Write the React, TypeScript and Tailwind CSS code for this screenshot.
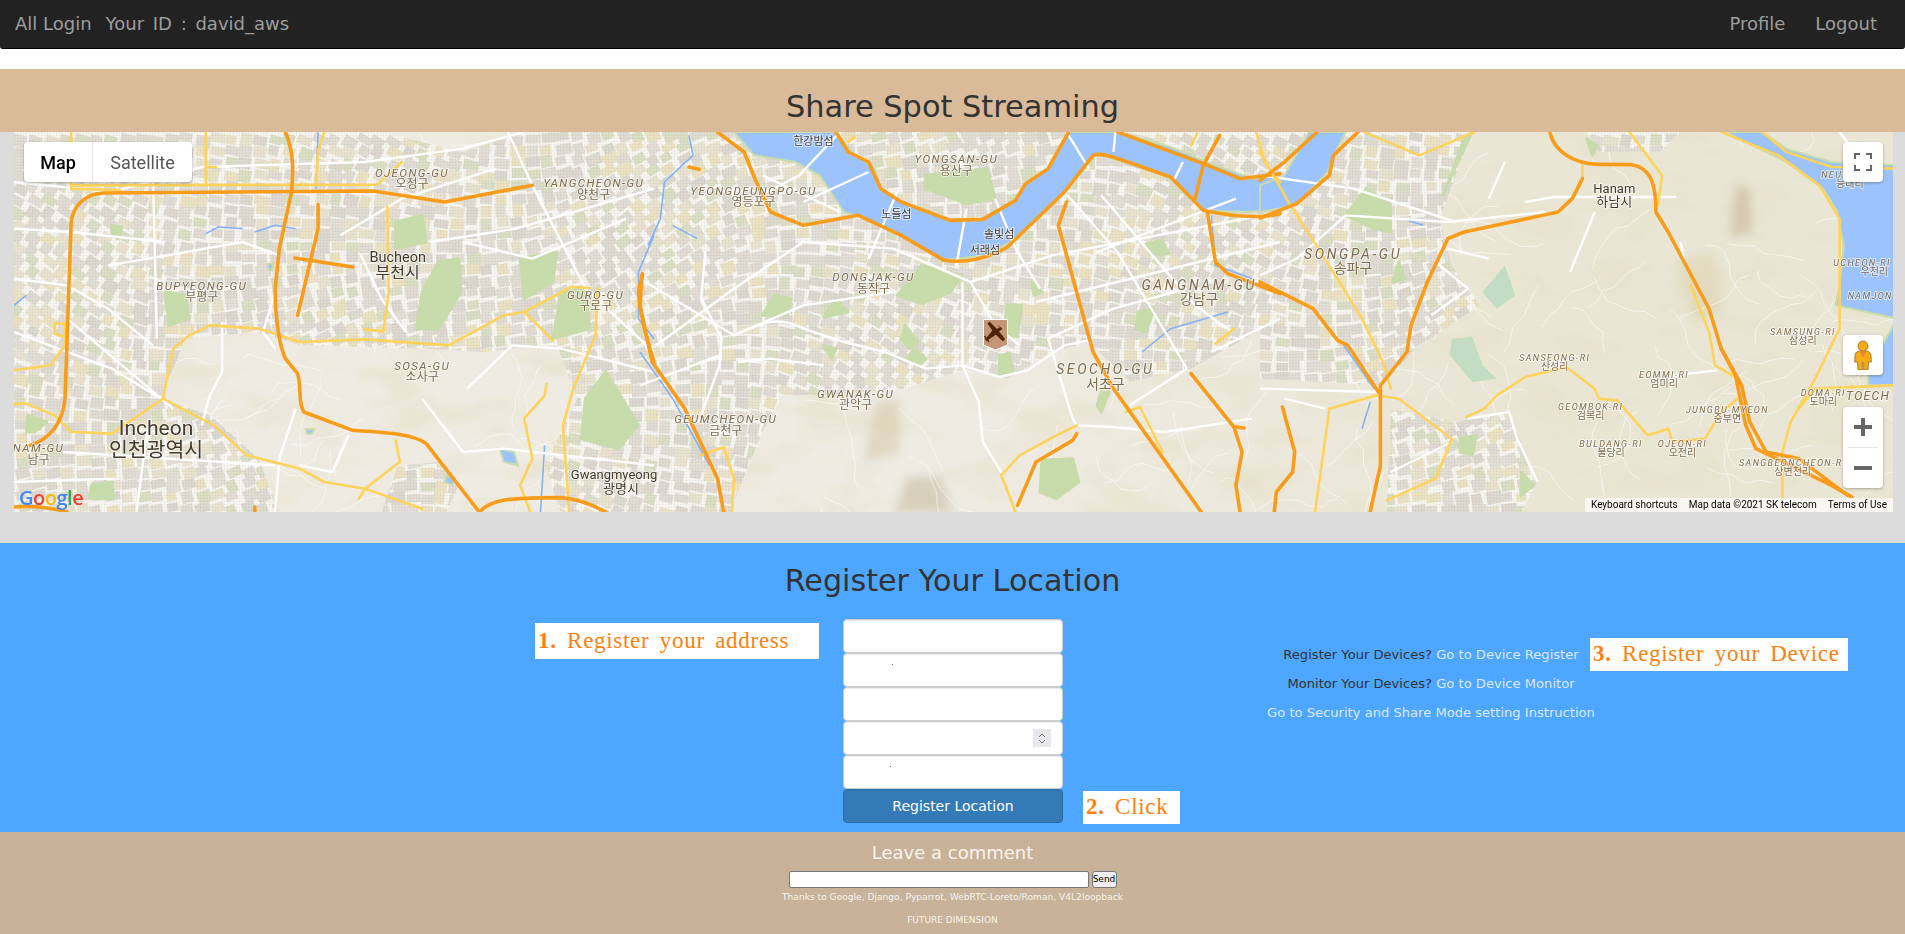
const SX = 2.45
const SY = 3

// map drawn from three overlapping tiles, coordinates are per tile
const OFF_A = 0
const OFF_B = 626
const OFF_C = 1246

const tile = (off: number) => `translate(${off} 0) scale(${1 / SX} ${1 / SY})`

type Tile = {
  off: number
  urban: string[]
  green: string[]
  water: string[]
  streams: string[]
  streets: string[]
  yellow: string[]
  orange: string[]
}

const tiles: Tile[] = [
  {
    off: OFF_A,
    urban: [
      'M 0 0 L 900 0 L 1100 60 L 1250 0 L 1568 0 L 1568 720 L 1330 640 L 1150 660 L 1000 650 L 700 640 L 600 600 L 420 620 L 360 800 L 480 850 L 600 980 L 650 1140 L 0 1140 Z',
      'M 940 1000 L 1040 990 L 1090 1060 L 1060 1140 L 900 1140 Z',
      'M 1330 640 L 1568 720 L 1568 1140 L 1340 1140 L 1300 1000 L 1380 800 Z',
    ],
    green: [
      'M 935 270 L 1000 250 L 1010 330 L 935 350 Z',
      'M 1040 390 L 1090 380 L 1095 480 L 1040 590 L 985 590 L 1000 480 Z',
      'M 1240 380 L 1330 360 L 1320 450 L 1250 500 Z',
      'M 1340 480 L 1400 470 L 1410 590 L 1320 620 Z',
      'M 1400 800 L 1450 720 L 1530 880 L 1480 950 L 1390 920 Z',
      'M 370 480 L 420 490 L 430 560 L 380 580 Z',
      'M 190 1060 L 240 1050 L 245 1100 L 185 1100 Z',
      'M 240 280 L 265 285 L 255 320 L 240 310 Z',
      'M 35 850 L 80 870 L 50 900 L 30 900 Z',
    ],
    water: [
      'M 1190 950 L 1225 960 L 1235 1000 L 1200 990 Z',
      'M 1060 1030 L 1080 1040 L 1075 1060 L 1055 1050 Z',
      'M 715 892 L 735 892 L 730 905 L 718 905 Z',
      'M 622 395 L 636 395 L 632 415 L 622 412 Z',
    ],
    streams: [
      'M 745 0 L 740 170',
      'M 1568 310 L 1530 420 L 1530 560 L 1568 620',
      'M 470 305 L 500 285 L 560 290',
      'M 590 300 L 640 280 L 690 290',
      'M 1300 940 L 1290 1140',
      'M 0 520 L 30 490',
    ],
    streets: [
      'M 0 150 L 240 180 L 460 105 L 860 90 L 1100 50 L 1250 0',
      'M 0 600 L 240 710 L 360 800',
      'M 130 560 L 390 830',
      'M 230 400 L 330 380 L 560 330 L 650 370',
      'M 800 310 L 950 200 L 1180 110',
      'M 1020 330 L 1230 290 L 1568 170',
      'M 1210 0 L 1270 160 L 1400 470 L 1568 660',
      'M 1100 330 L 1270 380 L 1500 260',
      'M 510 570 L 510 720 L 480 790 L 460 880',
      'M 690 830 L 650 980 L 640 1140',
      'M 1000 800 L 1100 960 L 1200 950 L 1568 1000',
      'M 1110 770 L 1220 640 L 1340 650 L 1568 720',
      'M 820 910 L 780 1020 L 700 1000',
      'M 640 480 L 610 600 L 640 650',
      'M 850 370 L 900 500 L 960 600',
      'M 0 290 L 140 300 L 370 330',
      'M 0 440 L 130 460 L 230 530 L 340 640',
      'M 340 100 L 350 620',
      'M 120 960 L 640 1000',
      'M 330 860 L 300 1140',
      'M 0 1050 L 250 1040',
    ],
    yellow: [
      'M 140 0 L 140 170 L 260 175',
      'M 470 0 L 470 160',
      'M 760 0 L 745 60 L 740 160',
      'M 140 160 L 890 158 L 950 90',
      'M 470 105 L 495 105',
      'M 915 225 L 918 480 L 905 598 L 860 592',
      'M 1365 465 L 1250 540 L 1200 550 L 1065 640 L 860 622 L 700 630 L 600 590 L 480 580 L 430 610 L 390 650 L 365 800 L 240 905 L 140 900 L 100 850 L 30 815 L 0 815',
      'M 365 800 L 490 880 L 570 970 L 700 1010 L 760 1050 L 860 1070 L 1000 1130',
      'M 0 715 L 90 700 L 125 640 L 125 575 L 100 575 L 100 605 L 125 615',
      'M 1250 540 L 1320 625',
      'M 1430 470 L 1425 610 L 1370 770 L 1345 880 L 1360 1140',
      'M 1305 755 L 1300 790 L 1250 860 L 1270 980 L 1240 1060 L 1265 1140',
      'M 935 925 L 945 990 L 860 1070 L 845 1100',
      'M 1365 465 L 1410 468',
    ],
    orange: [
      'M 40 940 C 90 920 120 870 125 800 L 140 270 C 145 220 175 185 220 183 L 880 177 L 1055 210 L 1270 160',
      'M 665 0 C 685 60 685 110 680 180 L 650 350 L 640 470 C 640 560 650 640 665 680 L 695 725 C 705 770 695 810 710 840 L 830 895 C 900 900 980 905 1010 935 L 1140 1140',
      'M 745 218 L 745 290 L 695 550',
      'M 688 378 L 830 405',
      'M 1140 1140 C 1170 1100 1220 1097 1340 1097 C 1380 1100 1420 1120 1450 1140',
      'M 0 1125 C 50 1120 100 1130 130 1140',
      'M 590 1125 L 590 1140',
      'M 1540 425 L 1530 480 C 1535 560 1550 620 1568 690',
    ],
  },
  {
    off: OFF_B,
    urban: [
      'M 0 0 L 1568 0 L 1568 560 L 1350 710 L 1200 750 L 1100 630 L 1010 660 L 900 740 L 800 710 L 650 770 L 450 790 L 350 790 L 300 900 L 220 1140 L 0 1140 Z',
    ],
    green: [
      'M 690 400 L 790 430 L 760 480 L 690 515 L 630 490 Z',
      'M 700 130 L 850 110 L 870 200 L 800 215 L 700 170 Z',
      'M 330 490 L 370 500 L 360 550 L 300 550 Z',
      'M 480 500 L 510 540 L 450 555 Z',
      'M 650 580 L 680 630 L 660 650 L 640 620 Z',
      'M 670 650 L 700 680 L 685 700 L 655 680 Z',
      'M 900 520 L 935 520 L 925 615 L 890 600 Z',
      'M 880 670 L 905 665 L 915 725 L 880 730 Z',
      'M 985 985 L 1060 980 L 1075 1050 L 1020 1100 L 980 1080 Z',
      'M 1240 335 L 1280 325 L 1295 365 L 1250 365 Z',
      'M 450 640 L 480 650 L 470 680 Z',
      'M 1220 540 L 1260 530 L 1240 600 L 1215 590 Z',
      'M 960 450 L 985 480 L 965 490 Z',
      'M 1130 780 L 1150 780 L 1130 840 L 1120 820 Z',
    ],
    water: [
      'M 230 0 L 480 0 L 520 60 L 575 110 L 590 170 L 640 210 L 770 265 L 830 262 L 920 205 L 950 150 L 1000 110 L 1050 0 L 1170 0 L 1300 45 L 1400 95 L 1500 140 L 1568 130 L 1568 235 L 1480 240 L 1380 235 L 1300 135 L 1120 65 L 1040 180 L 920 320 L 850 370 L 740 385 L 640 310 L 530 250 L 500 240 L 440 130 L 380 90 L 280 70 Z',
    ],
    streams: [
      'M 120 10 L 130 70 L 60 150 L 50 260 L 20 340',
      'M 0 660 L 80 800 L 170 1000',
      'M 1400 250 L 1410 400 L 1500 440',
      'M 1440 540 L 1300 590 L 1230 660',
      'M 80 280 L 140 320',
    ],
    streets: [
      'M 230 610 C 300 570 340 550 400 590 L 500 630 L 600 660 L 700 710 L 790 700 L 880 735 L 950 715 L 1040 640 L 1100 625',
      'M 790 450 L 790 700 L 830 810 L 840 930 L 890 1030',
      'M 160 360 L 150 500 L 200 620 L 195 700 L 150 850',
      'M 700 390 L 810 450 L 1010 370 L 1568 240',
      'M 810 450 L 870 580 L 930 640',
      'M 810 450 L 620 350 L 400 330 L 230 470 L 40 640',
      'M 0 440 L 230 610 L 400 520 L 620 480',
      'M 195 670 L 0 760',
      'M 490 0 L 390 130 L 280 200',
      'M 560 120 L 400 210',
      'M 1040 180 L 1170 360 L 1340 710',
      'M 1050 10 L 1100 110',
      'M 870 200 L 920 350 L 980 470',
      'M 800 230 L 775 400',
      'M 630 180 L 560 380',
      'M 1330 90 L 1310 140',
      'M 1165 0 L 1160 60',
      'M 970 510 L 1568 330',
      'M 1130 190 L 1360 520 L 1450 600',
      'M 1120 360 L 1460 200',
      'M 300 130 L 490 240',
      'M 1000 620 L 1160 530 L 1340 470',
      'M 1000 620 L 1060 860 L 1070 880 L 1160 885 L 1280 900 L 1340 890 L 1500 860',
      'M 1200 820 L 1340 710',
      'M 1400 660 L 1568 560',
      'M 240 690 L 320 680 L 450 700',
    ],
    yellow: [
      'M 1070 880 L 1020 910 L 930 970 L 885 1030 L 920 1140',
      'M 205 945 L 150 970',
      'M 205 945 L 230 1040 L 225 1140',
      'M 1225 825 L 1280 960',
      'M 1190 840 L 1225 825',
      'M 1510 0 L 1530 90 L 1568 150',
      'M 1350 40 L 1365 5',
      'M 1455 590 L 1410 635',
      'M 510 30 L 525 15',
    ],
    orange: [
      'M 190 0 L 255 60 L 285 150 L 320 240 L 400 280 L 535 250 L 640 310 L 745 385 C 800 395 860 375 900 345 L 1040 180 L 1110 70 C 1130 60 1150 70 1300 135 L 1380 235 C 1420 245 1500 265 1568 245',
      'M 480 0 L 510 60 L 560 90 L 590 170 L 640 210 L 760 265 L 840 262 L 920 205 L 945 155 L 1000 110 L 1050 0',
      'M 1170 0 L 1380 95 L 1470 140 L 1568 125',
      'M 1420 10 L 1380 100 L 1360 200',
      'M 1045 210 L 1025 280 L 1110 660 L 1160 770 L 1375 1140',
      'M 1350 725 L 1455 885 L 1475 960 L 1460 1060 L 1470 1140',
      'M 1460 885 L 1480 888',
      'M 1390 240 L 1410 390 L 1440 425 L 1568 485',
      'M 5 430 L 0 520 L 30 690 L 110 830 L 190 1040 L 205 1140',
      'M 120 105 L 145 112',
      'M 1070 905 L 1060 925 L 970 990 L 925 1120',
    ],
  },
  {
    off: OFF_C,
    urban: [
      'M 0 0 L 520 0 L 440 260 L 470 400 L 540 520 L 380 650 L 300 760 L 0 740 Z',
      'M 320 830 L 480 870 L 610 840 L 680 1050 L 640 1140 L 310 1140 Z',
      'M 800 0 L 1030 0 L 980 60 L 830 60 Z',
    ],
    green: [
      'M 260 170 L 320 220 L 320 300 L 280 290 L 210 250 Z',
      'M 450 190 L 500 20 L 520 0 L 480 100 Z',
      'M 800 20 L 825 40 L 815 70 Z',
      'M 340 390 L 355 440 L 325 450 Z',
      'M 490 920 L 530 910 L 520 970 L 490 960 Z',
      'M 640 1020 L 670 1060 L 640 1090 Z',
    ],
    water: [
      'M 120 0 L 210 0 L 185 60 L 165 120 L 90 220 L 0 240 L 0 160 L 60 130 Z',
      'M 1140 0 L 1230 0 L 1290 50 L 1400 90 L 1568 100 L 1568 760 L 1490 760 L 1490 720 L 1560 560 L 1410 520 L 1420 460 L 1430 340 L 1415 240 L 1380 170 L 1290 90 Z',
    ],
    streams: ['M 205 640 L 280 770', 'M 270 810 L 250 890', 'M 350 260 L 400 280'],
    streets: [
      'M 650 210 L 720 195 L 810 195 L 1020 195',
      'M 0 430 L 90 380 L 210 250 L 460 270 L 700 240',
      'M 0 130 L 230 170 L 480 270',
      'M 0 770 L 290 780',
      'M 460 350 L 560 380',
      'M 430 390 L 510 470 L 420 550',
      'M 60 800 L 160 830',
      'M 510 860 L 610 840 L 630 920 L 680 1050',
      'M 320 1020 L 470 930',
      'M 820 240 L 760 420',
      'M 600 90 L 560 200',
      'M 1030 330 L 1045 410',
      'M 1010 730 L 1120 715',
      'M 1420 0 L 1500 130',
    ],
    yellow: [
      'M 255 0 L 390 70 L 525 0',
      'M 790 100 L 790 140',
      'M 905 0 L 960 90 L 985 130 L 975 220',
      'M 0 60 L 70 210 L 200 460 L 250 560 L 305 700 L 320 770',
      'M 170 830 L 285 790 L 340 800 L 470 920 L 430 1040 L 310 1105',
      'M 170 830 L 135 1140',
      'M 1130 0 L 1270 70 L 1370 160 L 1420 260 L 1420 500 L 1420 590 L 1360 740 L 1300 870 L 1280 960 L 1280 1140',
      'M 1230 0 L 1290 60 L 1400 105 L 1550 110',
      'M 1320 830 L 1360 770 L 1550 760',
      'M 505 855 L 550 830 L 580 790 L 650 735 L 700 720 L 750 705 L 820 770 L 830 800 L 875 805 L 950 910 L 1000 890 L 1010 930 L 1090 920 L 1130 840 L 1170 800',
      'M 1055 460 L 1100 600 L 1115 700 L 1165 735',
    ],
    orange: [
      'M 140 0 L 60 90 L 0 145',
      'M 240 0 L 180 70 L 170 130 L 90 215 L 0 258',
      'M 710 0 C 720 60 770 95 830 97 L 910 98 C 950 105 970 140 970 240 L 1000 300 L 1100 530 L 1130 650 L 1180 760 L 1200 870 L 1240 960 L 1320 980 L 1440 1090',
      'M 1130 650 L 1165 730 L 1190 880 L 1215 950 L 1300 1000 L 1400 1060 L 1450 1095',
      'M 790 140 L 765 200 L 730 240 L 500 300 L 460 320 L 410 450 L 370 580 L 360 660 L 295 760 L 295 1000 L 270 1140',
      'M 0 450 L 130 530 L 190 625 L 215 640 L 290 780',
      'M 55 825 L 85 960 L 80 1020 L 40 1080 L 35 1140',
    ],
  },
]

// [tile offset, x, baseline y, text, size, kind]
type Label = [number, number, number, string, number, 'area' | 'ko' | 'city']

const labels: Label[] = [
  [OFF_A, 975, 135, 'OJEONG-GU', 11.5, 'area'],
  [OFF_A, 975, 168, '오정구', 12, 'ko'],
  [OFF_A, 1420, 165, 'YANGCHEON-GU', 11.5, 'area'],
  [OFF_A, 1420, 200, '양천구', 12, 'ko'],
  [OFF_A, 940, 390, 'Bucheon', 14.5, 'city'],
  [OFF_A, 940, 437, '부천시', 16, 'city'],
  [OFF_A, 460, 474, 'BUPYEONG-GU', 11.5, 'area'],
  [OFF_A, 460, 508, '부평구', 12, 'ko'],
  [OFF_A, 1425, 500, 'GURO-GU', 11.5, 'area'],
  [OFF_A, 1425, 535, '구로구', 12, 'ko'],
  [OFF_A, 1000, 714, 'SOSA-GU', 11.5, 'area'],
  [OFF_A, 1000, 748, '소사구', 12, 'ko'],
  [OFF_A, 348, 908, 'Incheon', 21, 'city'],
  [OFF_A, 348, 974, '인천광역시', 20.5, 'city'],
  [OFF_A, 60, 960, 'NAM-GU', 11.5, 'area'],
  [OFF_A, 60, 995, '남구', 12, 'ko'],
  [OFF_A, 1470, 1040, 'Gwangmyeong', 13, 'city'],
  [OFF_A, 1487, 1082, '광명시', 13, 'city'],
  [OFF_B, 425, 38, '한강밤섬', 11, 'city'],
  [OFF_B, 775, 92, 'YONGSAN-GU', 11.5, 'area'],
  [OFF_B, 775, 128, '용산구', 12, 'ko'],
  [OFF_B, 278, 188, 'YEONGDEUNGPO-GU', 11.5, 'area'],
  [OFF_B, 278, 222, '영등포구', 12, 'ko'],
  [OFF_B, 628, 258, '노들섬', 11, 'city'],
  [OFF_B, 880, 317, '솔빛섬', 11, 'city'],
  [OFF_B, 845, 366, '서래섬', 11, 'city'],
  [OFF_B, 572, 448, 'DONGJAK-GU', 11.5, 'area'],
  [OFF_B, 572, 484, '동작구', 12, 'ko'],
  [OFF_B, 1370, 475, 'GANGNAM-GU', 14, 'area'],
  [OFF_B, 1370, 517, '강남구', 14, 'ko'],
  [OFF_B, 1140, 727, 'SEOCHO-GU', 14, 'area'],
  [OFF_B, 1140, 770, '서초구', 14, 'ko'],
  [OFF_B, 528, 798, 'GWANAK-GU', 11.5, 'area'],
  [OFF_B, 528, 832, '관악구', 12, 'ko'],
  [OFF_B, 210, 873, 'GEUMCHEON-GU', 11.5, 'area'],
  [OFF_B, 210, 908, '금천구', 12, 'ko'],
  [OFF_C, 868, 184, 'Hanam', 13, 'city'],
  [OFF_C, 868, 222, '하남시', 13, 'city'],
  [OFF_C, 228, 382, 'SONGPA-GU', 14, 'area'],
  [OFF_C, 228, 424, '송파구', 14, 'ko'],
  [OFF_C, 722, 686, 'SANSEONG-RI', 9, 'area'],
  [OFF_C, 722, 714, '산성리', 10, 'ko'],
  [OFF_C, 1330, 608, 'SAMSUNG-RI', 9, 'area'],
  [OFF_C, 1330, 635, '삼성리', 10, 'ko'],
  [OFF_C, 990, 738, 'EOMMI-RI', 9, 'area'],
  [OFF_C, 990, 765, '엄미리', 10, 'ko'],
  [OFF_C, 810, 833, 'GEOMBOK-RI', 9, 'area'],
  [OFF_C, 810, 860, '검복리', 10, 'ko'],
  [OFF_C, 1145, 842, 'JUNGBU-MYEON', 9, 'area'],
  [OFF_C, 1145, 870, '중부면', 10, 'ko'],
  [OFF_C, 860, 945, 'BULDANG-RI', 9, 'area'],
  [OFF_C, 860, 971, '불당리', 10, 'ko'],
  [OFF_C, 1035, 945, 'OJEON-RI', 9, 'area'],
  [OFF_C, 1035, 972, '오전리', 10, 'ko'],
  [OFF_C, 1305, 1002, 'SANGBEONCHEON-RI', 9, 'area'],
  [OFF_C, 1305, 1028, '상변천리', 10, 'ko'],
  [OFF_C, 1380, 792, 'DOMA-RI', 9, 'area'],
  [OFF_C, 1380, 818, '도마리', 10, 'ko'],
  [OFF_C, 1475, 402, 'UCHEON-RI', 9, 'area'],
  [OFF_C, 1505, 430, '우천리', 10, 'ko'],
  [OFF_C, 1495, 500, 'NAMJON', 9, 'area'],
  [OFF_C, 1410, 138, 'NEUN', 9, 'area'],
  [OFF_C, 1445, 165, '능내리', 10, 'ko'],
  [OFF_C, 1490, 803, 'TOECH', 12, 'area'],
]

// small seeded random, so the street mesh stays the same on every load
let seed = 20211
const rnd = () => {
  seed = (seed * 16807) % 2147483647
  return seed / 2147483647
}

const blockColors = ['#dedad1', '#dcd8cf', '#e0dcd3', '#dad6cd', '#e6e0cd', '#e9dfc1', '#dedad1', '#d8dcc2']

const blocks = (() => {
  const out: { x: number; y: number; w: number; h: number; a: number; fill: string }[] = []
  for (let y = 0; y < 380; y += 12) {
    for (let x = 0; x < 1879; x += 15) {
      out.push({
        x: x + rnd() * 3,
        y: y + rnd() * 3,
        w: 10 + rnd() * 6,
        h: 8 + rnd() * 5,
        a: 24 * Math.sin(x / 170 + y / 90) + 14 * Math.cos(x / 63 - y / 210),
        fill: blockColors[Math.floor(rnd() * blockColors.length)],
      })
    }
  }
  return out
})()

// thin branching lanes out in the hills
const lanes = (() => {
  const out: string[] = []
  for (let i = 0; i < 260; i++) {
    let x = rnd() * 1879
    let y = rnd() * 380
    let a = rnd() * Math.PI * 2
    let d = `M${x.toFixed(1)} ${y.toFixed(1)}`
    for (let s = 0; s < 7; s++) {
      a += (rnd() - 0.5) * 1.2
      x += Math.cos(a) * (6 + rnd() * 10)
      y += Math.sin(a) * (6 + rnd() * 10)
      d += `L${x.toFixed(1)} ${y.toFixed(1)}`
    }
    out.push(d)
  }
  return out
})()

function MapCanvas() {
  return (
    <svg viewBox="0 0 1879 380" className="block h-[380px] w-[1879px] [font-family:Roboto,'Noto_Sans_CJK_KR',sans-serif]">
      <defs>
        <linearGradient id="ground" x1="0" x2="1" y1="0" y2="0">
          <stop offset="0.5" stopColor="#eeebe3" />
          <stop offset="0.8" stopColor="#eae6d6" />
        </linearGradient>
        <pattern id="speckle" width="3" height="3" patternUnits="userSpaceOnUse">
          <rect width="1" height="1" fill="#a9a59a" opacity="0.22" />
          <rect x="2" y="1" width="1" height="1" fill="#f4f2ec" opacity="0.3" />
        </pattern>
        <clipPath id="urbanClip">
          {tiles.flatMap((t) => t.urban.map((d) => <path key={d} d={d} transform={tile(t.off)} />))}
        </clipPath>
        <filter id="relief" x="0" y="0" width="100%" height="100%">
          <feTurbulence type="fractalNoise" baseFrequency="0.014 0.03" numOctaves="4" seed="7" />
          <feColorMatrix values="0 0 0 0 0.8 0 0 0 0 0.75 0 0 0 0 0.58 1.7 0 0 0 -0.75" />
        </filter>
        <filter id="soft">
          <feGaussianBlur stdDeviation="5" />
        </filter>
      </defs>

      <rect width="1879" height="380" fill="url(#ground)" />

      {/* hills */}
      <rect width="1879" height="380" filter="url(#relief)" />
      <g filter="url(#soft)">
        <path d="M 850 330 L 862 270 L 885 268 L 885 320 Z" fill="#d2c39f" opacity="0.5" />
        <path d="M 880 380 L 895 345 L 925 345 L 940 380 Z" fill="#b8a98b" opacity="0.4" />
        <path d="M 1715 105 L 1722 55 L 1735 55 L 1738 100 Z" fill="#c2b291" opacity="0.55" />
        <path d="M 1660 130 L 1700 120 L 1710 180 L 1680 190 Z" fill="#dcd3b1" opacity="0.55" />
      </g>
      <g fill="none" stroke="#fff" strokeWidth="0.8" opacity="0.7">
        {lanes.map((d, i) => (
          <path key={i} d={d} />
        ))}
      </g>

      {/* built up areas, blocks with white streets between them */}
      <g clipPath="url(#urbanClip)">
        <rect width="1879" height="380" fill="#f6f4ef" />
        {blocks.map((b, i) => (
          <rect key={i} x={b.x} y={b.y} width={b.w} height={b.h} fill={b.fill} transform={`rotate(${b.a.toFixed(1)} ${b.x.toFixed(1)} ${b.y.toFixed(1)})`} />
        ))}
        <rect width="1879" height="380" fill="url(#speckle)" />
      </g>

      {/* parks out in the hills */}
      <g transform={tile(OFF_C)} fill="#c3dcc4">
        <path d="M 600 400 L 625 490 L 580 530 L 545 480 Z" />
        <path d="M 470 620 L 520 615 L 545 700 L 580 740 L 520 750 L 465 670 Z" />
      </g>

      {tiles.map((t) => (
        <g key={t.off} transform={tile(t.off)}>
          {t.green.map((d) => (
            <path key={d} d={d} fill="#c8dbab" stroke="#c8dbab" strokeWidth="3" strokeLinejoin="round" vectorEffect="non-scaling-stroke" />
          ))}
          {t.water.map((d) => (
            <path key={d} d={d} fill="#9cc3fb" stroke="#c9dcae" strokeWidth="2" vectorEffect="non-scaling-stroke" />
          ))}
          {t.streams.map((d) => (
            <path key={d} d={d} fill="none" stroke="#86b2f4" strokeWidth="1.6" vectorEffect="non-scaling-stroke" />
          ))}
          {t.streets.map((d) => (
            <path key={d} d={d} fill="none" stroke="#fff" strokeWidth="2.4" strokeLinejoin="round" vectorEffect="non-scaling-stroke" />
          ))}
        </g>
      ))}
      {tiles.map((t) => (
        <g key={t.off} transform={tile(t.off)} fill="none" strokeLinejoin="round" strokeLinecap="round">
          {t.yellow.map((d) => (
            <path key={d} d={d} stroke="#fdd35b" strokeWidth="2.6" vectorEffect="non-scaling-stroke" />
          ))}
          {t.orange.map((d) => (
            <path key={d} d={d} stroke="#f89c1c" strokeWidth="3.6" vectorEffect="non-scaling-stroke" />
          ))}
        </g>
      ))}

      {labels.map(([off, x, y, text, size, kind]) => (
        <text
          key={`${off}-${text}`}
          x={off + x / SX}
          y={y / SY}
          textAnchor="middle"
          fontSize={size}
          fontStyle={kind === 'area' ? 'italic' : 'normal'}
          letterSpacing={kind === 'area' ? (size >= 14 ? 2.6 : 1.4) : 0}
          fill={kind === 'city' ? '#433a2c' : '#7c6b4f'}
          stroke="#fff"
          strokeOpacity="0.6"
          strokeWidth="1.8"
          paintOrder="stroke"
        >
          {text}
        </text>
      ))}

      {/* location marker */}
      <g transform="translate(969 187)">
        <path d="M0.5 0.5H24.5V26L12.5 31L0.5 26Z" fill="#c49675" stroke="#fff" />
        <g fill="#4f2409">
          <path d="M4.5 4.5L6.5 2.5L14 10L22 20L20 22.5L11 14Z" />
          <path d="M18 8L19 10L11 17L3.5 22L2 20.5L9 12Z" />
          <path d="M1 17.5L2 16.5L6.5 22.5L5.5 23.5Z" />
        </g>
        <path d="M15 6.5L19 10.5" stroke="#4f2409" strokeWidth="0.8" />
      </g>
    </svg>
  )
}

function MapButton({ children, className }: { children: React.ReactNode; className: string }) {
  return (
    <div className={`absolute right-[10px] flex w-10 flex-col items-center justify-center rounded-sm bg-white shadow-[0_1px_3px_rgba(0,0,0,0.3)] ${className}`}>
      {children}
    </div>
  )
}

function GoogleMap() {
  return (
    <div className="relative h-[380px] w-[1879px] overflow-hidden">
      <MapCanvas />

      <div className="absolute left-[10px] top-[10px] flex h-10 rounded-sm bg-white text-[18px] shadow-[0_1px_3px_rgba(0,0,0,0.3)] [font-family:Roboto,sans-serif]">
        <div className="flex w-[69px] items-center justify-center border-r border-[#e6e6e6] font-medium text-black">Map</div>
        <div className="flex w-[99px] items-center justify-center text-[#565656]">Satellite</div>
      </div>

      <MapButton className="top-[10px] h-10">
        <svg width="18" height="18" viewBox="0 0 18 18" fill="none" stroke="#666" strokeWidth="2">
          <path d="M1 6V1H6M12 1H17V6M17 12V17H12M6 17H1V12" />
        </svg>
      </MapButton>

      <MapButton className="top-[203px] h-10">
        <svg width="18" height="30" viewBox="0 0 18 30">
          <path d="M5.5 11C2.5 11.5 1.2 13 1 15.5L0.7 22H3.5L4 30H8.3V23H9.7V30H14L14.5 22H17.3L17 15.5C16.8 13 15.5 11.5 12.5 11Z" fill="#f5ac17" stroke="#7a5a20" strokeWidth="0.7" />
          <circle cx="9" cy="6" r="5" fill="#f5ac17" stroke="#7a5a20" strokeWidth="0.7" />
          <path d="M5.5 11L9 18L12.5 11" fill="#e9862b" />
        </svg>
      </MapButton>

      <MapButton className="top-[275px] h-[81px]">
        <div className="flex h-10 w-full items-center justify-center">
          <svg width="18" height="18" viewBox="0 0 18 18">
            <path d="M7 0H11V7H18V11H11V18H7V11H0V7H7Z" fill="#666" />
          </svg>
        </div>
        <div className="h-px w-[30px] bg-[#e6e6e6]" />
        <div className="flex h-10 w-full items-center justify-center">
          <div className="h-1 w-[18px] bg-[#666]" />
        </div>
      </MapButton>

      <div className="absolute bottom-1 left-[5px] text-[20px] font-semibold leading-5 tracking-[-0.5px] [font-family:'Open_Sans',sans-serif]">
        <span className="text-[#4285f4]">G</span>
        <span className="text-[#ea4335]">o</span>
        <span className="text-[#fbbc05]">o</span>
        <span className="text-[#4285f4]">g</span>
        <span className="text-[#34a853]">l</span>
        <span className="text-[#ea4335]">e</span>
      </div>

      <div className="absolute bottom-0 right-0 flex h-[14px] items-center gap-[5px] bg-white/70 pr-[6px] text-[10px] leading-none text-black [font-family:Roboto,sans-serif]">
        <span className="pl-[6px] pr-[6px]">Keyboard shortcuts</span>
        <span className="pr-[6px]">Map data ©2021 SK telecom</span>
        <span>Terms of Use</span>
      </div>
    </div>
  )
}

function StepLabel({ num, text, className }: { num: string; text: string; className: string }) {
  return (
    <div className={`flex items-center whitespace-pre bg-white pl-[3px] text-[23px] tracking-[0.7px] text-[#ff7f0e] [font-family:'Liberation_Serif',serif] [word-spacing:4px] ${className}`}>
      <span className="font-semibold">{num}</span>
      <span> {text}</span>
    </div>
  )
}

const fieldClass = 'block h-[34px] w-full rounded-[4px] border border-[#ccc] bg-white shadow-[inset_0_1px_1px_rgba(0,0,0,0.075)]'

function RegisterForm() {
  return (
    <div className="w-[220px]">
      <input className={fieldClass} />
      <div className="relative">
        <input className={fieldClass} />
        <div className="absolute left-[49px] top-[11px] size-px bg-[#777]" />
      </div>
      <input className={fieldClass} />
      <div className="relative">
        <input className={fieldClass} />
        <div className="absolute right-3 top-2 flex h-[18px] w-[18px] flex-col items-center justify-center gap-px bg-[#e8e8ec] text-[#777]">
          <svg width="8" height="5" viewBox="0 0 8 5" fill="none" stroke="currentColor">
            <path d="M1 4L4 1L7 4" />
          </svg>
          <svg width="8" height="5" viewBox="0 0 8 5" fill="none" stroke="currentColor">
            <path d="M1 1L4 4L7 1" />
          </svg>
        </div>
      </div>
      <div className="relative">
        <input className={fieldClass} />
        <div className="absolute left-[47px] top-[11px] size-px bg-[#777]" />
      </div>
      <button className="block h-[34px] w-full rounded-[4px] border border-[#2e6da4] bg-[#337ab7] text-[14px] text-white">
        Register Location
      </button>
    </div>
  )
}

export default function App() {
  return (
    <div className="min-h-screen bg-white text-[#333] [font-family:'DejaVu_Sans',sans-serif]">
      <nav className="flex h-[49px] items-center justify-between rounded-b-[3px] border-b border-black bg-[#222] pb-px pl-[15px] pr-[28px] text-[18px] text-[#9d9d9d]">
        <div className="flex gap-[14px]">
          <a>All Login</a>
          <a className="[word-spacing:3px]">Your ID : david_aws</a>
        </div>
        <div className="flex gap-[30px]">
          <a>Profile</a>
          <a>Logout</a>
        </div>
      </nav>

      <header className="mt-[20px] flex h-[63px] items-center justify-center bg-[#d9bb99]">
        <h2 className="pt-[12px] text-[30.4px]">Share Spot Streaming</h2>
      </header>

      <div className="h-[411px] bg-[#dcdcdc] px-[14px]">
        <GoogleMap />
      </div>

      <section className="h-[289px] bg-[#4da6ff]">
        <h2 className="h-[76px] pt-[20px] text-center text-[30.2px] leading-[36px]">Register Your Location</h2>
        <div className="flex pl-[535px]">
          <StepLabel num="1." text="Register your address" className="mt-[4px] h-[36px] w-[284px]" />
          <div className="ml-[24px]">
            <RegisterForm />
          </div>
          <StepLabel num="2." text="Click" className="ml-[20px] mt-[172px] h-[33px] w-[97px]" />
          <div className="ml-[86px] mt-[27px] flex h-[104px] w-[330px] flex-col items-center gap-[11px] text-[13.1px] leading-[18px]">
            <p>
              Register Your Devices? <a className="text-[#dbe9fb]">Go to Device Register</a>
            </p>
            <p>
              Monitor Your Devices? <a className="text-[#dbe9fb]">Go to Device Monitor</a>
            </p>
            <a className="text-[#dbe9fb]">Go to Security and Share Mode setting Instruction</a>
          </div>
          <StepLabel num="3." text="Register your Device" className="-ml-[6px] mt-[19px] h-[33px] w-[258px]" />
        </div>
      </section>

      <footer className="flex h-[102px] flex-col items-center bg-[#c8b299] text-[#f8f4ec]">
        <h4 className="mt-[9px] text-[18px] leading-[24px]">Leave a comment</h4>
        <form className="mt-[6px] flex h-[17px] gap-[3px]">
          <input className="h-[17px] w-[300px] rounded-[2px] border border-[#767676] bg-white" />
          <button className="h-[17px] w-[25px] rounded-[3px] border border-[#767676] bg-[#efeff2] text-[9px] leading-none text-black">Send</button>
        </form>
        <p className="mt-[2px] text-[9.1px] leading-[14px]">Thanks to Google, Django, Pyparrot, WebRTC-Loreto/Roman, V4L2loopback</p>
        <p className="mt-[9px] text-[9px] leading-[14px]">FUTURE DIMENSION</p>
      </footer>
    </div>
  )
}
